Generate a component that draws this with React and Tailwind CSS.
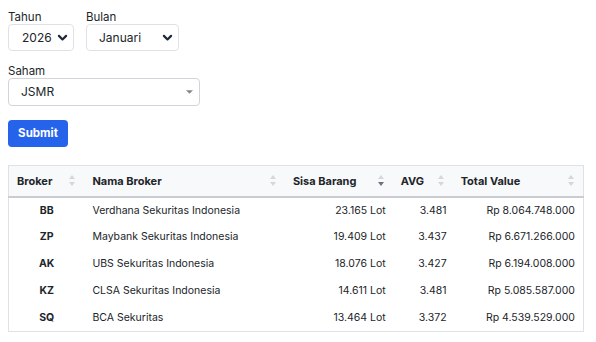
import React from 'react'

const rows = [
    { code: 'BB', name: 'Verdhana Sekuritas Indonesia', lot: '23.165 Lot', avg: '3.481', total: 'Rp 8.064.748.000' },
    { code: 'ZP', name: 'Maybank Sekuritas Indonesia', lot: '19.409 Lot', avg: '3.437', total: 'Rp 6.671.266.000' },
    { code: 'AK', name: 'UBS Sekuritas Indonesia', lot: '18.076 Lot', avg: '3.427', total: 'Rp 6.194.008.000' },
    { code: 'KZ', name: 'CLSA Sekuritas Indonesia', lot: '14.611 Lot', avg: '3.481', total: 'Rp 5.085.587.000' },
    { code: 'SQ', name: 'BCA Sekuritas', lot: '13.464 Lot', avg: '3.372', total: 'Rp 4.539.529.000' },
]

const Chevron = () => (
    <svg className='w-[11px] h-[11px] text-[#1f2937]' viewBox='0 0 20 20' fill='none' stroke='currentColor' strokeWidth='4' strokeLinecap='round' strokeLinejoin='round'>
        <path d='M3.5 7l6.5 6.5 6.5-6.5' />
    </svg>
)

const Sort = ({ desc }) => (
    <svg className='w-[6px] h-[11px]' viewBox='0 0 6 11'>
        <path d='M3 0L6 4H0z' fill='#d4d7db' />
        <path d='M3 11L6 7H0z' fill={desc ? '#6b7280' : '#d4d7db'} />
    </svg>
)

const Th = ({ children, w, desc }) => (
    <th className={`${w} h-[31px] pl-2 pr-[9px] text-left font-bold`}>
        <div className='flex items-center justify-between'>
            <span>{children}</span>
            <Sort desc={desc} />
        </div>
    </th>
)

export default function App() {
    return (
        <div className='w-[596px] h-[342px] bg-white px-2 pt-[10px] text-[#212529]' style={{ fontFamily: 'Inter, "Noto Sans", sans-serif' }}>
            <div className='flex gap-[12px]'>
                <div>
                    <div className='text-[11.5px] leading-[14px]'>Tahun</div>
                    <div className='w-[66px] h-[27px] border border-[#dee2e6] rounded flex items-center justify-between pl-[13px] pr-[5px] text-[12px]'>
                        <span>2026</span>
                        <Chevron />
                    </div>
                </div>
                <div>
                    <div className='text-[11.5px] leading-[14px]'>Bulan</div>
                    <div className='w-[93px] h-[27px] border border-[#dee2e6] rounded flex items-center justify-between pl-[12px] pr-[5px] text-[12px]'>
                        <span>Januari</span>
                        <Chevron />
                    </div>
                </div>
            </div>
            <div className='mt-[13px]'>
                <div className='text-[11.5px] leading-[14px]'>Saham</div>
                <div className='w-[192px] h-[28px] border border-[#d1d5db] rounded flex items-center justify-between pl-[12px] pr-[6px] text-[12px]'>
                    <span>JSMR</span>
                    <svg className='w-[7px] h-[4px]' viewBox='0 0 8 4'><path d='M0 0H8L4 4z' fill='#888' /></svg>
                </div>
            </div>
            <button className='mt-[14px] w-[60px] h-[27px] rounded bg-[#2563eb] text-white text-[11.5px] font-bold'>Submit</button>
            <table className='mt-[18px] w-[576px] border border-[#dee2e6] border-collapse text-[10.5px]'>
                <thead className='bg-[#f8f9fa] text-[11px]'>
                    <tr className='border-b-2 border-[#c9cdd2]'>
                        <Th w='w-[76px]'>Broker</Th>
                        <Th w='w-[201px]'>Nama Broker</Th>
                        <Th w='w-[108px]' desc>Sisa Barang</Th>
                        <Th w='w-[60px]'>AVG</Th>
                        <Th w='w-[131px]'>Total Value</Th>
                    </tr>
                </thead>
                <tbody>
                    {rows.map((r) => (
                        <tr key={r.code} className='h-[27px]'>
                            <td className='text-center font-bold'>{r.code}</td>
                            <td className='pl-2'>{r.name}</td>
                            <td className='text-right pr-[7px]'>{r.lot}</td>
                            <td className='text-right pr-[6px]'>{r.avg}</td>
                            <td className='text-right pr-[8px]'>{r.total}</td>
                        </tr>
                    ))}
                </tbody>
            </table>
        </div>
    )
}
